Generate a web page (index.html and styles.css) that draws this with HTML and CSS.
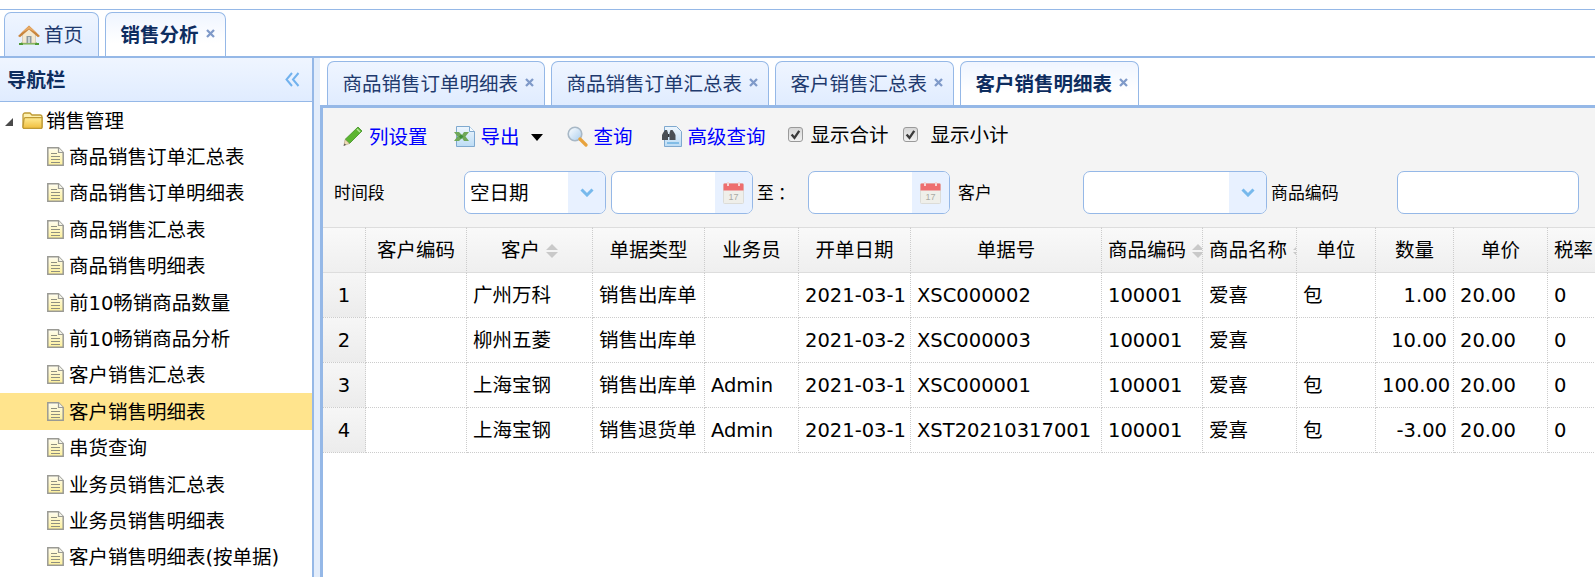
FILE: index.html
```html
<!DOCTYPE html>
<html lang="zh-CN">
<head>
<meta charset="utf-8">
<title>销售分析</title>
<link rel="stylesheet" href="styles.css">
</head>
<body>
<svg class="defs" aria-hidden="true">
  <defs>
    <linearGradient id="gFile" x1="0" y1="0" x2="0" y2="1"><stop offset="0" stop-color="#fffdf0"/><stop offset="1" stop-color="#fdf09a"/></linearGradient>
    <linearGradient id="gFolder" x1="0" y1="0" x2="0" y2="1"><stop offset="0" stop-color="#ffeb94"/><stop offset="1" stop-color="#efbd3c"/></linearGradient>
    <linearGradient id="gDoc" x1="0" y1="0" x2="0" y2="1"><stop offset="0" stop-color="#eef6fd"/><stop offset="1" stop-color="#bcdcf5"/></linearGradient>
    <linearGradient id="gLens" x1="0" y1="0" x2="1" y2="1"><stop offset="0" stop-color="#ffffff"/><stop offset="1" stop-color="#a9cdee"/></linearGradient>
    <symbol id="i-file" viewBox="0 0 17 19">
      <path d="M.8.8h10.700l4.700 4.700v12.700H.8z" fill="url(#gFile)" stroke="#9a9a94" stroke-width="1.500"/>
      <path d="M11.500.8v4.700h4.700" fill="#f4f4ea" stroke="#9a9a94" stroke-width="1.200"/>
      <path d="M4 6.500h6M4 9.500h9M4 12.500h9M4 15.500h9" stroke="#8f8f80" stroke-width="1.200"/>
    </symbol>
    <symbol id="i-close" viewBox="0 0 9 9">
      <path d="M1 1l7 7M8 1L1 8" stroke="#7f9ac9" stroke-width="2.300"/>
    </symbol>
    <symbol id="i-sort" viewBox="0 0 12 14">
      <path d="M0 6L6 0l6 6zM0 8h12l-6 6z" fill="#c9c9c9"/>
    </symbol>
    <symbol id="i-cal" viewBox="0 0 21 22">
      <rect x=".5" y="1.500" width="20" height="20" rx="1" fill="#efefea" stroke="#dcdcd8"/>
      <path d="M.5 2.500a1 1 0 0 1 1-1h18a1 1 0 0 1 1 1V8.500H.5z" fill="#ee6e70"/>
      <path d="M5 0v4M16 0v4" stroke="#f6d6d6" stroke-width="2"/>
      <text x="5.500" y="18" font-size="9" fill="#aaaaa4" font-family="Liberation Sans, sans-serif">17</text>
    </symbol>
    <symbol id="i-down" viewBox="0 0 14 9">
      <path d="M1.500 1.500L7 7l5.500-5.500" fill="none" stroke="#77b9ec" stroke-width="3"/>
    </symbol>
  </defs>
</svg>

<div class="app">
  <header class="top-tabs">
    <div class="tab tab-home">
      <svg class="ic-home" viewBox="0 0 22 20" aria-hidden="true">
        <path d="M3 17.500h16v2H3z" fill="#6fb24a"/>
        <path d="M1 18h4v2H1zM17 18h4v2h-4z" fill="#4f9a35"/>
        <path d="M4.500 9L11 3l6.500 6v9h-13z" fill="#f3e9d2" stroke="#cdbb98" stroke-width=".6"/>
        <path d="M8.500 11h5v7h-5z" fill="#8e9aa0"/>
        <path d="M10 12h2v6h-2z" fill="#c9d1d4"/>
        <path d="M0 11L11 .5l11 10.500-2 1.200L11 4.500 2 12.200z" fill="#c9853d"/>
        <path d="M3 8L11 1l8 7-8-4z" fill="#e8ab67"/>
      </svg>
      <span>首页</span>
    </div>
    <div class="tab tab-active">
      <span>销售分析</span>
      <svg class="ic-close"><use href="#i-close"/></svg>
    </div>
  </header>

  <div class="main">
    <aside class="side">
      <div class="side-head">
        <span>导航栏</span>
        <svg class="ic-collapse" viewBox="0 0 15 15" aria-hidden="true">
          <path d="M7 1L1.500 7.500 7 14M13.500 1L8 7.500 13.500 14" fill="none" stroke="#72b2ee" stroke-width="2"/>
        </svg>
      </div>
      <ul class="tree">
        <li class="tree-root">
          <svg class="ic-arrow" viewBox="0 0 8 8" aria-hidden="true"><path d="M8 0v8H0z" fill="#4a4a4a"/></svg>
          <svg class="ic-folder" viewBox="0 0 21 18" aria-hidden="true">
            <path d="M1 4a2 2 0 0 1 2-2h5l2 2h8a2 2 0 0 1 2 2v10a1.500 1.500 0 0 1-1.500 1.500h-16A1.500 1.500 0 0 1 1 16z" fill="#fdf0ae" stroke="#bf9a35" stroke-width="1.300"/>
            <path d="M1 16l1-8a1.500 1.500 0 0 1 1.500-1.300H20v9.300a1.500 1.500 0 0 1-1.500 1.500h-16A1.500 1.500 0 0 1 1 16z" fill="url(#gFolder)" stroke="#bf9a35" stroke-width="1.300"/>
          </svg>
          <span>销售管理</span>
        </li>
        <li class="tree-item"><svg class="ic-file"><use href="#i-file"/></svg><span>商品销售订单汇总表</span></li>
        <li class="tree-item"><svg class="ic-file"><use href="#i-file"/></svg><span>商品销售订单明细表</span></li>
        <li class="tree-item"><svg class="ic-file"><use href="#i-file"/></svg><span>商品销售汇总表</span></li>
        <li class="tree-item"><svg class="ic-file"><use href="#i-file"/></svg><span>商品销售明细表</span></li>
        <li class="tree-item"><svg class="ic-file"><use href="#i-file"/></svg><span>前10畅销商品数量</span></li>
        <li class="tree-item"><svg class="ic-file"><use href="#i-file"/></svg><span>前10畅销商品分析</span></li>
        <li class="tree-item"><svg class="ic-file"><use href="#i-file"/></svg><span>客户销售汇总表</span></li>
        <li class="tree-item is-selected"><svg class="ic-file"><use href="#i-file"/></svg><span>客户销售明细表</span></li>
        <li class="tree-item"><svg class="ic-file"><use href="#i-file"/></svg><span>串货查询</span></li>
        <li class="tree-item"><svg class="ic-file"><use href="#i-file"/></svg><span>业务员销售汇总表</span></li>
        <li class="tree-item"><svg class="ic-file"><use href="#i-file"/></svg><span>业务员销售明细表</span></li>
        <li class="tree-item"><svg class="ic-file"><use href="#i-file"/></svg><span>客户销售明细表(按单据)</span></li>
      </ul>
    </aside>
    <div class="splitter"></div>

    <section class="content">
      <nav class="inner-tabs">
        <div class="tab"><span>商品销售订单明细表</span><svg class="ic-close"><use href="#i-close"/></svg></div>
        <div class="tab"><span>商品销售订单汇总表</span><svg class="ic-close"><use href="#i-close"/></svg></div>
        <div class="tab"><span>客户销售汇总表</span><svg class="ic-close"><use href="#i-close"/></svg></div>
        <div class="tab tab-active"><span>客户销售明细表</span><svg class="ic-close"><use href="#i-close"/></svg></div>
      </nav>

      <div class="panel">
        <div class="toolbar">
          <div class="tool-row">
            <a class="tool-link link-cols">
              <svg class="ic-tool" viewBox="0 0 21 21" aria-hidden="true">
                <path d="M16 1l4 4L7.500 17.500 3 13.500z" fill="#5cb531" stroke="#3f8f22" stroke-width=".8"/>
                <path d="M15 3l3 3" stroke="#b6e59a" stroke-width="1.500"/>
                <path d="M3 13.500l4.500 4-5.500 2z" fill="#efdcb5" stroke="#a09070" stroke-width=".5"/>
                <path d="M1.500 20l1-2.500 1.500 1.300z" fill="#555"/>
              </svg>
              <span>列设置</span>
            </a>
            <a class="tool-link link-export">
              <svg class="ic-tool" viewBox="0 0 21 21" aria-hidden="true">
                <path d="M2.500.5h13l5 5v15h-18z" fill="url(#gDoc)" stroke="#7fa9cf"/>
                <path d="M15.500.5v5h5" fill="#f5fbff" stroke="#7fa9cf"/>
                <path d="M0 6h5l3 3 2-3h5l-3.500 4.500L15 15h-5l-2-3-3 3H0l3.500-4.500z" fill="#6fa85a"/>
                <path d="M7 8.500l2.500 2-2.500 2.500-2-2.500z" fill="#3f8f3c"/>
              </svg>
              <span>导出</span>
              <svg class="ic-caret" viewBox="0 0 12 7" aria-hidden="true"><path d="M0 0h12L6 7z" fill="#000"/></svg>
            </a>
            <a class="tool-link link-query">
              <svg class="ic-tool" viewBox="0 0 21 21" aria-hidden="true">
                <circle cx="8" cy="8" r="6.800" fill="url(#gLens)" stroke="#a8b8c6" stroke-width="1.600"/>
                <path d="M13 13l6 6" stroke="#e8a33d" stroke-width="3.200" stroke-linecap="round"/>
              </svg>
              <span>查询</span>
            </a>
            <a class="tool-link link-adv">
              <svg class="ic-tool" viewBox="0 0 21 21" aria-hidden="true">
                <path d="M3.500.5h12l5 5v15h-17z" fill="url(#gDoc)" stroke="#7fa9cf"/>
                <path d="M6 17h12" stroke="#6bb0e0" stroke-width="1.500"/>
                <path d="M2 7l2-3h2l1 3v7H1V9zM8.500 7l1-3h2l2 3 1 2v5H8.500z" fill="#4a4f55"/>
                <path d="M7 8h1.500v3H7z" fill="#30343a"/>
              </svg>
              <span>高级查询</span>
            </a>
            <label class="check check-first">
              <span class="check-box"><svg viewBox="0 0 15 15" aria-hidden="true"><path d="M3 7.500l3.300 3.800 5.500-8" fill="none" stroke="#3a3a3a" stroke-width="2.700"/></svg></span>
              <span class="check-text">显示合计</span>
            </label>
            <label class="check check-second">
              <span class="check-box"><svg viewBox="0 0 15 15" aria-hidden="true"><path d="M3 7.500l3.300 3.800 5.500-8" fill="none" stroke="#3a3a3a" stroke-width="2.700"/></svg></span>
              <span class="check-text">显示小计</span>
            </label>
          </div>

          <div class="form-row">
            <span class="f-label w-period">时间段</span>
            <div class="box w-select"><span class="box-value">空日期</span><span class="box-btn"><svg class="ic-down"><use href="#i-down"/></svg></span></div>
            <div class="box w-date gap-date"><span class="box-value"></span><span class="box-btn"><svg class="ic-cal"><use href="#i-cal"/></svg></span></div>
            <span class="f-label w-to">至：</span>
            <div class="box w-date"><span class="box-value"></span><span class="box-btn"><svg class="ic-cal"><use href="#i-cal"/></svg></span></div>
            <span class="f-label w-cust">客户</span>
            <div class="box w-combo"><span class="box-value"></span><span class="box-btn"><svg class="ic-down"><use href="#i-down"/></svg></span></div>
            <span class="f-label w-code">商品编码</span>
            <div class="box w-text"><span class="box-value"></span></div>
          </div>
        </div>

        <table class="grid">
          <colgroup>
            <col class="c-num"><col class="c-code"><col class="c-cust"><col class="c-type"><col class="c-user"><col class="c-date"><col class="c-no"><col class="c-pcode"><col class="c-pname"><col class="c-unit"><col class="c-qty"><col class="c-price"><col class="c-tax">
          </colgroup>
          <thead>
            <tr>
              <th></th>
              <th>客户编码</th>
              <th>客户<svg class="ic-sort"><use href="#i-sort"/></svg></th>
              <th>单据类型</th>
              <th>业务员</th>
              <th>开单日期</th>
              <th>单据号</th>
              <th>商品编码<svg class="ic-sort"><use href="#i-sort"/></svg></th>
              <th>商品名称<svg class="ic-sort"><use href="#i-sort"/></svg></th>
              <th>单位</th>
              <th>数量</th>
              <th>单价</th>
              <th>税率<svg class="ic-sort"><use href="#i-sort"/></svg></th>
            </tr>
          </thead>
          <tbody>
            <tr>
              <td class="num">1</td><td></td><td>广州万科</td><td>销售出库单</td><td></td><td>2021-03-1</td><td>XSC000002</td><td>100001</td><td>爱喜</td><td>包</td><td class="right">1.00</td><td>20.00</td><td>0</td>
            </tr>
            <tr>
              <td class="num">2</td><td></td><td>柳州五菱</td><td>销售出库单</td><td></td><td>2021-03-2</td><td>XSC000003</td><td>100001</td><td>爱喜</td><td></td><td class="right">10.00</td><td>20.00</td><td>0</td>
            </tr>
            <tr>
              <td class="num">3</td><td></td><td>上海宝钢</td><td>销售出库单</td><td>Admin</td><td>2021-03-1</td><td>XSC000001</td><td>100001</td><td>爱喜</td><td>包</td><td class="right">100.00</td><td>20.00</td><td>0</td>
            </tr>
            <tr>
              <td class="num">4</td><td></td><td>上海宝钢</td><td>销售退货单</td><td>Admin</td><td>2021-03-1</td><td>XST20210317001</td><td>100001</td><td>爱喜</td><td>包</td><td class="right">-3.00</td><td>20.00</td><td>0</td>
            </tr>
          </tbody>
        </table>
      </div>
    </section>
  </div>
</div>
</body>
</html>
```
FILE: styles.css
```css
* { box-sizing: border-box; }
html, body { margin: 0; padding: 0; height: 100%; overflow: hidden; background: #fff; }
body {
  font-family: "DejaVu Sans", "Noto Sans CJK SC", sans-serif;
  font-size: 19.5px;
  line-height: 26px;
  color: #000;
}
.defs { display: block; width: 0; height: 0; }
svg { display: block; flex: none; }

.app { display: flex; flex-direction: column; height: 577px; margin-top: 9px; border-top: 1px solid #95b8e7; }

/* tabs */
.top-tabs, .inner-tabs { display: flex; gap: 6px; flex: none; }
.top-tabs { padding: 2px 0 0 4px; border-bottom: 2px solid #95b8e7; }
.inner-tabs { padding: 3px 0 0 7px; }
.tab {
  display: flex;
  align-items: center;
  gap: 7px;
  height: 44px;
  padding: 0 10px 0 14.5px;
  border: 1px solid #95b8e7;
  border-bottom: 0;
  border-radius: 7px 7px 0 0;
  background: linear-gradient(#eff5ff, #e0ecff);
  color: #1f3a6e;
}
.tab span { padding-top: 3px; }
.tab-active { background: linear-gradient(#eff5ff, #fff 70%); color: #0e2d5f; font-weight: bold; }
.tab-home { padding: 0 15px 0 13px; gap: 4px; }
.ic-home { width: 22px; height: 20px; }
.ic-close { width: 9px; height: 9px; margin-top: -3px; }

/* main */
.main { display: flex; flex: 1; min-height: 0; }
.side { width: 314px; flex: none; border-right: 2px solid #95b8e7; overflow: hidden; }
.splitter { width: 6px; flex: none; background: #e3edfb; }
.content { flex: 1; min-width: 0; display: flex; flex-direction: column; overflow: hidden; }

.side-head {
  display: flex;
  align-items: center;
  justify-content: space-between;
  height: 44px;
  padding: 0 12px 0 7px;
  background: linear-gradient(#eff5ff, #e0ecff);
  border-bottom: 1px solid #95b8e7;
  color: #0e2d5f;
  font-weight: bold;
}
.side-head span { padding-top: 2px; }
.ic-collapse { width: 15px; height: 15px; margin-top: -1px; }

.tree { list-style: none; margin: 0; padding: 0; }
.tree-root, .tree-item { display: flex; align-items: center; height: 36.4px; white-space: nowrap; }
.tree-root span, .tree-item span { padding-top: 3px; }
.tree-root { padding-left: 5px; }
.tree-item { padding-left: 47px; gap: 5px; }
.is-selected { background: #ffe48d; }
.ic-arrow { width: 8px; height: 8px; margin-right: 9px; margin-top: 4px; }
.ic-folder { width: 21px; height: 18px; margin-right: 3px; }
.ic-file { width: 17px; height: 19px; }

/* panel */
.panel { flex: 1; min-height: 0; border-top: 3px solid #95b8e7; border-left: 3px solid #95b8e7; }
.toolbar { background: #f4f4f4; height: 119px; padding-top: 12px; }
.tool-row { display: flex; align-items: center; height: 34px; padding-left: 19px; }
.tool-link { display: flex; align-items: center; gap: 6px; color: #00f; }
.tool-link span { padding-top: 2px; }
.ic-tool { width: 21px; height: 21px; margin-top: -1px; }
.link-export { margin-left: 26px; }
.link-query { margin-left: 24px; }
.link-adv { margin-left: 28px; }
.ic-caret { width: 12px; height: 7px; margin-left: 5px; }
.check { display: flex; align-items: center; margin-top: -4px; }
.check-text { padding-top: 2px; }
.check-first { margin-left: 22px; gap: 8px; }
.check-second { margin-left: 14px; gap: 13px; }
.check-box {
  display: block;
  width: 15px;
  height: 15px;
  margin-top: -2px;
  border: 1px solid #9a9a9a;
  border-radius: 3px;
  background: linear-gradient(#d6d6d6, #f2f2f2);
}
.check-box svg { width: 13px; height: 13px; }

.form-row { display: flex; align-items: center; height: 43px; margin-top: 17px; padding-left: 11px; }
.f-label { font-size: 16.9px; white-space: nowrap; }
.w-period { width: 130px; }
.gap-date { margin-left: 5px; }
.w-to { width: 51px; margin-left: 4px; letter-spacing: 4px; }
.w-cust { width: 125px; margin-left: 8px; }
.w-code { width: 126px; margin-left: 4px; }
.box {
  display: flex;
  height: 43px;
  border: 1px solid #95b8e7;
  border-radius: 7px;
  background: #fff;
  overflow: hidden;
}
.w-select { width: 142px; }
.w-date { width: 142px; }
.w-combo { width: 184px; }
.w-text { width: 182px; }
.box-value { flex: 1; padding-left: 5px; padding-top: 1px; line-height: 41px; }
.box-btn { display: flex; align-items: center; justify-content: center; width: 37px; background: #e8f1ff; }
.ic-down { width: 14px; height: 9px; }
.ic-cal { width: 21px; height: 22px; }

/* grid */
.grid { table-layout: fixed; border-collapse: separate; border-spacing: 0; width: 1285px; }
.c-num { width: 43px; }
.c-code { width: 101px; }
.c-cust { width: 126px; }
.c-type { width: 112px; }
.c-user { width: 94px; }
.c-date { width: 112px; }
.c-no { width: 191px; }
.c-pcode { width: 101px; }
.c-pname { width: 94px; }
.c-unit { width: 79px; }
.c-qty { width: 78px; }
.c-price { width: 94px; }
.c-tax { width: 60px; }
.grid th, .grid td {
  padding: 2px 6px 0;
  overflow: hidden;
  white-space: nowrap;
  font-weight: normal;
  border-right: 1px dotted #ccc;
  border-bottom: 1px dotted #ccc;
}
.grid th {
  height: 46px;
  text-align: center;
  background: linear-gradient(#f9f9f9, #efefef);
  border-top: 1px solid #ddd;
  border-bottom: 1px solid #ddd;
}
.grid td { height: 45px; }
.grid td.num { text-align: center; background: linear-gradient(#f6f6f6, #ececec); }
.grid td.right { text-align: right; }
.ic-sort { display: inline-block; width: 12px; height: 14px; margin-left: 6px; vertical-align: -1px; }
```
